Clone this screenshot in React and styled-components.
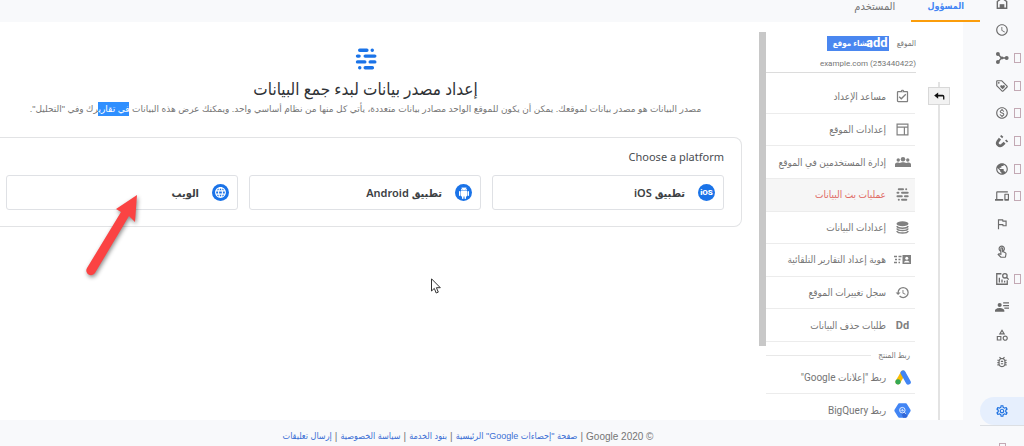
import React from 'react';
import styled, { createGlobalStyle, css } from 'styled-components';
import {
    MdSchedule,
    MdOutlineLoyalty,
    MdOutlineMonetizationOn,
    MdPublic,
    MdDevices,
    MdOutlineFlag,
    MdOutlineTouchApp,
    MdOutlineCategory,
    MdOutlineBugReport,
    MdOutlineSettings,
    MdHistory,
    MdLanguage,
    MdOutlineAssignmentTurnedIn,
} from 'react-icons/md';

const uiFont = `Roboto, 'DejaVu Sans Condensed', 'DejaVu Sans', sans-serif`;
const textFont = `'Liberation Sans', 'DejaVu Sans Condensed', 'DejaVu Sans', sans-serif`;
const headingFont = `'Noto Sans', 'DejaVu Sans Condensed', 'DejaVu Sans', sans-serif`;

const HomeIcon = () => (
    <svg viewBox='0 0 24 24' width='1em' height='1em' fill='none' stroke='currentColor' strokeWidth='2.400'>
        <path d='M4 9.500l8-6 8 6V21H4z' />
        <path d='M8 21v-7h8v7z' fill='currentColor' stroke='none' />
    </svg>
);

const HubIcon = () => (
    <svg viewBox='0 0 24 24' width='1em' height='1em' fill='currentColor'>
        <circle cx='5' cy='5' r='3.4' />
        <circle cx='5' cy='19' r='3.4' />
        <circle cx='20' cy='12' r='3.4' />
        <path d='M5 5l6 7-6 7M11 12h9' fill='none' stroke='currentColor' strokeWidth='2.4' />
        <circle cx='12' cy='12' r='2.4' />
    </svg>
);

const MagnetIcon = () => (
    <svg viewBox='0 0 24 24' width='1em' height='1em' fill='none' stroke='currentColor'>
        <path d='M8.500 8L5 12.500c-3.500 5 2.500 10 7 6.500l4.500-4' strokeWidth='4.800' />
        <path d='M10.500 5.500l2-2.300M18.800 13l2.200-2' strokeWidth='4.800' />
    </svg>
);

const QueryIcon = () => (
    <svg viewBox='0 0 24 24' width='1em' height='1em' fill='none' stroke='currentColor' strokeWidth='2.200'>
        <path d='M11 3H3v18h18v-7M7.500 10v8M12 13v5M16.500 15v3' />
        <circle cx='17' cy='6.500' r='3.800' />
        <path d='M20 9.500l3.500 3.500' />
    </svg>
);

const PersonListIcon = () => (
    <svg viewBox='0 0 24 24' width='1em' height='1em' fill='currentColor'>
        <circle cx='8' cy='8.500' r='3.500' />
        <path d='M0 20v-2c0-3 5-4.500 8-4.500s8 1.500 8 4.500v2zM14 4h10v2.200H14zM14 8.500h10v2.200H14zM16 13h8v2.200h-8z' />
    </svg>
);

const StreamIcon = () => (
    <svg viewBox='0 0 21 22' width='1em' height='1em' stroke='currentColor' strokeWidth='3.400' strokeLinecap='round'>
        <path d='M4.200 2.300h7.200M16.700 2.300h.1M2 8.100h1.600M9.700 8.100h9.600M2 13.900h7.300M14.700 13.900h4.600M4.200 19.700h.1M9.700 19.700h7.200' />
    </svg>
);

const LayoutIcon = () => (
    <svg viewBox='0 0 24 24' width='1em' height='1em' fill='none' stroke='currentColor' strokeWidth='2.200'>
        <path d='M2 2h20v20H2zM2 7.500h20M15.500 7.500V22' />
    </svg>
);

const PeopleIcon = () => (
    <svg viewBox='0 0 32 20' width='16' height='10' fill='currentColor'>
        <circle cx='6.500' cy='6' r='3.400' />
        <circle cx='25.500' cy='6' r='3.400' />
        <circle cx='16' cy='4.500' r='4.500' />
        <path d='M0 20v-5c0-3 3-4 6.500-4l3 1c3-2 10-2 13 0l3-1c3.500 0 6.500 1 6.500 4v5z' />
    </svg>
);

const DatabaseIcon = () => (
    <svg viewBox='0 0 24 24' width='1em' height='1em' fill='none' stroke='currentColor' strokeWidth='2.800'>
        <ellipse cx='12' cy='5' rx='11' ry='4.500' fill='currentColor' stroke='none' />
        <path d='M1.500 9.500c2 5 19 5 21 0M1.500 14c2 5 19 5 21 0M1.500 18.500c2 5 19 5 21 0' />
    </svg>
);

const IdentityIcon = () => (
    <svg viewBox='0 0 34 18' width='17' height='9'>
        <path d='M0 3h6M9 3h6M2 9h4M9 9h4M0 15h6M9 15h3' stroke='currentColor' strokeWidth='3' />
        <path d='M17 0h17v18H17z' fill='currentColor' />
        <circle cx='25.500' cy='6.500' r='3' fill='#fff' />
        <path d='M20 15c0-5 11-5 11 0z' fill='#fff' />
    </svg>
);

const AdsIcon = () => (
    <svg viewBox='0 0 48 44' width='16' height='15' strokeWidth='15' strokeLinecap='round'>
        <path d='M24 9L9 35' stroke='#fbbc04' />
        <path d='M24 8l16 28' stroke='#4285f4' />
        <circle cx='9' cy='35' r='8' fill='#34a853' />
    </svg>
);

const BigQueryIcon = () => (
    <svg viewBox='0 0 51 46' width='17' height='15'>
        <path d='M15 1h21q2 0 3 2l11 18q1 2 0 4L39 43q-1 2-3 2H15q-2 0-3-2L1 25q-1-2 0-4L12 3q1-2 3-2z' fill='#4285f4' />
        <path d='M33 30l8 11-5 4h-9l-5-14z' fill='#3367d6' />
        <circle cx='25' cy='22' r='8.500' fill='none' stroke='#fff' strokeWidth='2.500' />
        <path d='M21 21v4M25 18v8M29 22v3M31 28l5 5' stroke='#fff' strokeWidth='2.500' />
    </svg>
);

const AndroidIcon = () => (
    <svg viewBox='0 0 24 24' width='12' height='12' fill='currentColor'>
        <path d='M6 18c0 .55.45 1 1 1h1v3.500a1.500 1.500 0 0 0 3 0V19h2v3.500a1.500 1.500 0 0 0 3 0V19h1c.55 0 1-.45 1-1V8H6z' />
        <path d='M3.500 8A1.500 1.500 0 0 0 2 9.500v7a1.500 1.500 0 0 0 3 0v-7A1.500 1.500 0 0 0 3.500 8zM20.500 8A1.500 1.500 0 0 0 19 9.500v7a1.500 1.500 0 0 0 3 0v-7A1.500 1.500 0 0 0 20.500 8z' />
        <path d='M6 7c0-2 1-3.700 2.500-4.800L7.100.8l.7-.7 1.500 1.500a6 6 0 0 1 5.400 0L16.200.1l.7.7-1.400 1.400C17 3.300 18 5 18 7zM9 4v1h1V4zM14 4v1h1V4z' fillRule='evenodd' />
    </svg>
);

const BackArrow = () => (
    <svg viewBox='0 0 12 9' width='11' height='8'>
        <path d='M0 4l4.500-3.500v2.500h5q2 0 2 2v3.500H10V5H4.500v2.500z' fill='#111' />
    </svg>
);

const railItems = [
    { label: 'Home', icon: <HomeIcon /> },
    { label: 'Realtime', icon: <MdSchedule /> },
    { label: 'Acquisition', icon: <HubIcon />, more: true },
    { label: 'Engagement', icon: <MdOutlineLoyalty />, more: true },
    { label: 'Monetization', icon: <MdOutlineMonetizationOn />, more: true },
    { label: 'Retention', icon: <MagnetIcon />, more: true },
    { label: 'Demographics', icon: <MdPublic />, more: true },
    { label: 'Tech', icon: <MdDevices />, more: true },
    { label: 'Conversions', icon: <MdOutlineFlag /> },
    { label: 'Events', icon: <MdOutlineTouchApp /> },
    { label: 'Analysis', icon: <QueryIcon />, more: true },
    { label: 'Audiences', icon: <PersonListIcon /> },
    { label: 'Custom definitions', icon: <MdOutlineCategory /> },
    { label: 'DebugView', icon: <MdOutlineBugReport /> },
];

const propertyItems = [
    { label: 'مساعد الإعداد', icon: <MdOutlineAssignmentTurnedIn /> },
    { label: 'إعدادات الموقع', icon: <LayoutIcon />, small: true },
    { label: 'إدارة المستخدمين في الموقع', icon: <PeopleIcon /> },
    { label: 'عمليات بث البيانات', icon: <StreamIcon />, small: true, active: true },
    { label: 'إعدادات البيانات', icon: <DatabaseIcon />, small: true },
    { label: 'هوية إعداد التقارير التلقائية', icon: <IdentityIcon /> },
    { label: 'سجل تغييرات الموقع', icon: <MdHistory /> },
    { label: 'طلبات حذف البيانات', icon: <b>Dd</b>, text: true },
];

const linkItems = [
    { label: 'ربط "إعلانات Google"', icon: <AdsIcon /> },
    { label: 'ربط BigQuery', icon: <BigQueryIcon /> },
];

const platforms = [
    { label: 'تطبيق iOS', icon: <b>iOS</b> },
    { label: 'تطبيق Android', icon: <AndroidIcon /> },
    { label: 'الويب', icon: <MdLanguage /> },
];

const footerLinks = ['صفحة "إحصاءات Google" الرئيسية', 'بنود الخدمة', 'سياسة الخصوصية', 'إرسال تعليقات'];

function NavItem({ item }) {
    return (
        <NavItemStyled href='#' $active={item.active}>
            <NavIcon $small={item.small} $text={item.text}>
                {item.icon}
            </NavIcon>
            {item.label}
        </NavItemStyled>
    );
}

function PropertyColumn() {
    return (
        <Column>
            <ColumnHeader>
                <div>
                    الموقع
                    <CreateButton type='button'>
                        إنشاء موقع
                        <AddMark>add</AddMark>
                    </CreateButton>
                </div>
                <PropertyName dir='ltr'>example.com (253440422)</PropertyName>
            </ColumnHeader>
            <NavList>
                {propertyItems.map((item) => (
                    <NavItem key={item.label} item={item} />
                ))}
            </NavList>
            <SectionTitle>ربط المنتج</SectionTitle>
            {linkItems.map((item) => (
                <NavItem key={item.label} item={item} />
            ))}
        </Column>
    );
}

function StreamSetup() {
    return (
        <Setup>
            <Intro>
                <StreamIcon />
                <h1>إعداد مصدر بيانات لبدء جمع البيانات</h1>
                <p>
                    مصدر البيانات هو مصدر بيانات لموقعك. يمكن أن يكون للموقع الواحد مصادر بيانات متعددة، يأتي كل منها
                    من نظام أساسي واحد. ويمكنك عرض هذه البيانات <mark>في تقاري</mark>رك وفي "التحليل".
                </p>
            </Intro>
            <Card>
                <h2>Choose a platform</h2>
                <Platforms>
                    {platforms.map((platform) => (
                        <PlatformButton type='button' key={platform.label}>
                            <PlatformIcon>{platform.icon}</PlatformIcon>
                            {platform.label}
                        </PlatformButton>
                    ))}
                </Platforms>
            </Card>
            <Pointer viewBox='0 0 70 100'>
                <path d='M57 9L36 23l5 3-34 56a4.500 4.500 0 0 0 8 5l34-57 6 6z' fill='#fb4343' />
            </Pointer>
            <Cursor viewBox='0 0 10 16'>
                <path d='M.5.8v12.200l2.800-2.600 1.900 4.600 2.100-.9-1.900-4.400h3.900z' fill='#fff' stroke='#333' />
            </Cursor>
        </Setup>
    );
}

function App() {
    return (
        <>
            <GlobalStyle />
            <AppStyled dir='rtl'>
                <Rail>
                    <RailList>
                        {railItems.map((item) => (
                            <RailLink href='#' aria-label={item.label} key={item.label}>
                                {item.icon}
                                {item.more && <MoreBox />}
                            </RailLink>
                        ))}
                    </RailList>
                    <RailLink href='#' aria-label='Admin' $active>
                        <MdOutlineSettings />
                    </RailLink>
                    <RailFooter>
                        <MoreBox />
                    </RailFooter>
                </Rail>
                <Page>
                    <Tabs>
                        <Tab type='button' $active>
                            المسؤول
                        </Tab>
                        <Tab type='button'>المستخدم</Tab>
                    </Tabs>
                    <Panel>
                        <Timeline>
                            <button type='button' aria-label='Back'>
                                <BackArrow />
                            </button>
                        </Timeline>
                        <PropertyColumn />
                        <ScrollThumb />
                        <StreamSetup />
                    </Panel>
                    <Footer>
                        <span>© 2020 Google</span>
                        {footerLinks.map((link) => (
                            <React.Fragment key={link}>
                                <span>|</span>
                                <a href='#'>{link}</a>
                            </React.Fragment>
                        ))}
                    </Footer>
                </Page>
            </AppStyled>
        </>
    );
}

const GlobalStyle = createGlobalStyle`
  * {
    box-sizing: border-box;
  }

  body {
    margin: 0;
    overflow: hidden;
    background-color: #f8f9fb;
    font-family: ${uiFont};
    color: #757575;
  }

  h1, h2, p {
    margin: 0;
    font-weight: 400;
  }

  a {
    text-decoration: none;
    color: inherit;
  }

  button {
    font-family: inherit;
    cursor: pointer;
  }
`;

const AppStyled = styled.div`
  display: flex;
  height: 100vh;
  overflow: hidden;
`;

const Rail = styled.nav`
  width: 44px;
  flex-shrink: 0;
`;

const RailList = styled.div`
  display: grid;
  grid-auto-rows: 1fr;
  height: 387px;
  margin-top: -11px;
  margin-bottom: 21px;
`;

const RailLink = styled.a`
  display: flex;
  align-items: center;
  gap: 5px;
  direction: ltr;
  padding-left: 15px;
  font-size: 14px;
  color: #6b6b6b;

  svg {
    flex-shrink: 0;
  }

  ${(props) =>
    props.$active &&
    css`
      height: 28px;
      border-radius: 14px 0 0 14px;
      background-color: #e6effd;
      color: #1a6fe0;
    `}
`;

const MoreBox = styled.span`
  width: 7px;
  height: 10px;
  border: 1px solid #c3a9b4;
`;

const RailFooter = styled.div`
  display: flex;
  justify-content: center;
  padding-top: 17px;
  border-top: 1px solid #dcdfe3;
`;

const Page = styled.div`
  display: flex;
  flex-direction: column;
  flex: 1;
  min-width: 0;
`;

const Tabs = styled.div`
  display: flex;
  height: 22px;
`;

const Tab = styled.button`
  display: flex;
  align-items: center;
  padding: 0 16px 8px;
  border: none;
  border-bottom: 2px solid ${(props) => (props.$active ? '#fb9d0b' : 'transparent')};
  background: none;
  font-size: ${(props) => (props.$active ? 9 : 11)}px;
  font-weight: ${(props) => (props.$active ? 700 : 400)};
  color: ${(props) => (props.$active ? '#4285f4' : '#757575')};
`;

const Panel = styled.div`
  display: flex;
  flex: 1;
  min-height: 0;
  overflow: hidden;
  margin-right: 17px;
  background-color: #fff;
`;

const Timeline = styled.div`
  display: flex;
  justify-content: center;
  align-items: flex-start;
  width: 22px;
  margin: 60px 13px 0 12px;
  background: linear-gradient(#e3e3e3, #e3e3e3) center / 2px 100% no-repeat;

  button {
    display: flex;
    align-items: center;
    justify-content: center;
    width: 22px;
    height: 18px;
    margin-top: 5px;
    padding: 0;
    border: 1px solid #d8d8d8;
    background-color: #f2f2f2;
  }
`;

const Column = styled.div`
  width: 150px;
  flex-shrink: 0;
`;

const ColumnHeader = styled.div`
  padding-top: 14px;
  height: 51px;
  border-bottom: 1px solid #dcdcdc;
  margin-bottom: 8px;
  font-size: 8px;

  div {
    display: flex;
    align-items: center;
    gap: 8px;
  }
`;

const CreateButton = styled.button`
  position: relative;
  width: 62px;
  height: 15px;
  padding: 0 0 0 6px;
  border: none;
  background-color: #4a87f0;
  font-size: 8px;
  font-weight: 700;
  text-align: left;
  color: #fff;
`;

const AddMark = styled.span`
  position: absolute;
  top: -2px;
  right: 1px;
  font-size: 13px;
  line-height: 18px;
`;

const PropertyName = styled.p`
  padding-top: 8px;
  text-align: right;
  line-height: 10px;
`;

const NavList = styled.div`
  display: grid;
  grid-auto-rows: 1fr;
  height: 261px;
`;

const NavItemStyled = styled.a`
  display: flex;
  align-items: center;
  gap: 8px;
  height: 33px;
  margin-right: 1px;
  padding-right: 4px;
  border-bottom: 1px solid #ececec;
  background-color: ${(props) => (props.$active ? '#f6f6f6' : 'transparent')};
  font-size: 10px;
  white-space: nowrap;
  color: ${(props) => (props.$active ? '#e06a64' : '#757575')};

  ${NavList} & {
    height: auto;
  }
`;

const NavIcon = styled.span`
  display: flex;
  align-items: center;
  justify-content: center;
  width: 17px;
  font-size: ${(props) => (props.$text ? 11 : props.$small ? 13 : 15)}px;
  color: #808080;
`;

const SectionTitle = styled.div`
  display: flex;
  align-items: center;
  gap: 7px;
  height: 19px;
  padding-top: 8px;
  padding-right: 6px;
  font-size: 8px;

  &::after {
    content: '';
    flex: 1;
    height: 1px;
    background-color: #e8e8e8;
  }
`;

const ScrollThumb = styled.div`
  width: 7px;
  height: 314px;
  margin-top: 10px;
  flex-shrink: 0;
  background-color: #c8c8c8;
`;

const Setup = styled.main`
  position: relative;
  flex: 1;
  min-width: 0;
  padding: 26px 17px 0 0;
`;

const Intro = styled.div`
  display: flex;
  flex-direction: column;
  align-items: center;
  margin-left: -11px;

  > svg {
    font-size: 22px;
    color: #1a73e8;
  }

  h1 {
    margin-top: 8px;
    font-size: 17px;
    line-height: 22px;
    color: #2f3236;
  }

  p {
    font-family: 'Liberation Sans', 'DejaVu Sans', sans-serif;
    font-size: 9px;
    line-height: 18px;
    white-space: nowrap;
    color: #767676;
  }

  mark {
    padding: 2px 0;
    background-color: #2f8fff;
    color: #fff;
  }
`;

const Card = styled.section`
  margin-top: 19px;
  padding: 10px 17px 16px 6px;
  border: 1px solid #e2e3e5;
  border-left: none;
  border-radius: 0 8px 8px 0;

  h2 {
    font-family: ${headingFont};
    font-size: 11px;
    line-height: 18px;
    color: #4a4d51;
  }
`;

const Platforms = styled.div`
  display: flex;
  gap: 11px;
  margin-top: 9px;
`;

const PlatformButton = styled.button`
  display: flex;
  align-items: center;
  gap: 13px;
  flex: 1;
  height: 35px;
  padding: 0 8px;
  border: 1px solid #dfe1e5;
  border-radius: 3px;
  background-color: #fff;
  font-family: ${headingFont};
  font-size: 11px;
  font-weight: 600;
  color: #3c4043;
`;

const PlatformIcon = styled.span`
  display: flex;
  align-items: center;
  justify-content: center;
  width: 17px;
  height: 17px;
  border-radius: 50%;
  background-color: #1a73e8;
  font-size: 13px;
  color: #fff;

  b {
    font-family: Roboto, sans-serif;
    font-size: 8px;
  }
`;

const Pointer = styled.svg`
  position: absolute;
  left: 80px;
  top: 164px;
  width: 70px;
  height: 100px;
  filter: drop-shadow(1px 2px 2px rgba(0, 0, 0, 0.45));
`;

const Cursor = styled.svg`
  position: absolute;
  left: 431px;
  top: 256px;
  width: 10px;
  height: 16px;
`;

const Footer = styled.footer`
  display: flex;
  align-items: center;
  justify-content: center;
  gap: 3px;
  height: 26px;
  padding: 6px 44px 0 0;
  font-family: ${textFont};
  font-size: 10px;
  white-space: nowrap;

  a {
    font-size: 9px;
    color: #3b6fd4;
  }
`;

export default App;
